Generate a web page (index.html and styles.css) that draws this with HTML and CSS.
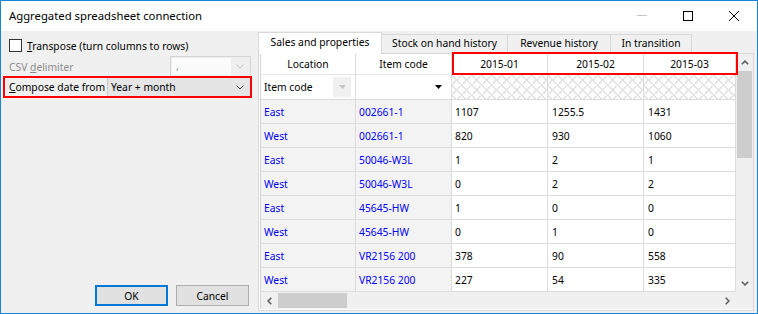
FILE: index.html
```html
<!DOCTYPE html>
<html>
<head>
<meta charset="utf-8">
<link rel="stylesheet" href="styles.css">
</head>
<body>
<div class="window">
  <div class="titlebar">
    <div class="title">Aggregated spreadsheet connection</div>
    <div class="caption-btns">
      <div class="cbtn"><svg width="10" height="10" viewBox="0 0 10 10"><line x1="0" y1="4.5" x2="10" y2="4.5" stroke="#c4c4c4" stroke-width="1"/></svg></div>
      <div class="cbtn"><svg width="10" height="10" viewBox="0 0 10 10"><rect x="0.5" y="0.5" width="9" height="9" fill="none" stroke="#000" stroke-width="1"/></svg></div>
      <div class="cbtn"><svg width="10" height="10" viewBox="0 0 10 10"><path d="M0 0 L10 10 M10 0 L0 10" stroke="#000" stroke-width="1"/></svg></div>
    </div>
  </div>
  <div class="client">
    <div class="left">
      <div class="check-row"><span class="checkbox"></span><span><u>T</u>ranspose (turn columns to rows)</span></div>
      <div class="csv-row">
        <span class="disabled-label">CSV <u>d</u>elimiter</span>
        <div class="combo-disabled"><span class="cd-field">,</span><svg class="chev" width="8" height="5" viewBox="0 0 8 5"><path d="M0.5 0.5 L4 4 L7.5 0.5" fill="none" stroke="#c2c2c2" stroke-width="1"/></svg></div>
      </div>
      <div class="date-row">
        <span class="date-label"><u>C</u>ompose date from</span>
        <div class="combo"><span class="combo-text">Year + month</span><svg class="chev" width="8" height="5" viewBox="0 0 8 5"><path d="M0.5 0.5 L4 4 L7.5 0.5" fill="none" stroke="#404040" stroke-width="1"/></svg></div>
      </div>
      <div class="buttons">
        <button class="btn btn-default">OK</button>
        <button class="btn">Cancel</button>
      </div>
    </div>
    <div class="tabs">
      <div class="tabstrip">
        <div class="tab sel t1">Sales and properties</div>
        <div class="tab t2">Stock on hand history</div>
        <div class="tab t3">Revenue history</div>
        <div class="tab t4">In transition</div>
      </div>
      <div class="tabpage">
        <div class="gridbox">
          <div class="gridmain">
            <div class="gtable">
              <div class="row hrow">
                <div class="cell c1">Location</div>
                <div class="cell c2">Item code</div>
                <div class="hl">
                  <div class="cell c3">2015-01</div>
                  <div class="cell c4">2015-02</div>
                  <div class="cell c5">2015-03</div>
                </div>
              </div>
              <div class="row frow">
                <div class="cell c1 fcell"><span>Item code</span><span class="fbtn dis"><svg width="7" height="4" viewBox="0 0 7 4"><path d="M0 0 H7 L3.5 4 Z" fill="#c3c3c3"/></svg></span></div>
                <div class="cell c2 fcell"><span></span><span class="fbtn"><svg width="7" height="4" viewBox="0 0 7 4"><path d="M0 0 H7 L3.5 4 Z" fill="#000"/></svg></span></div>
                <div class="cell c3 hatch"></div>
                <div class="cell c4 hatch"></div>
                <div class="cell c5 hatch"></div>
              </div>
              <div class="row drow"><div class="cell c1">East</div><div class="cell c2">002661-1</div><div class="cell c3">1107</div><div class="cell c4">1255.5</div><div class="cell c5">1431</div></div>
              <div class="row drow"><div class="cell c1">West</div><div class="cell c2">002661-1</div><div class="cell c3">820</div><div class="cell c4">930</div><div class="cell c5">1060</div></div>
              <div class="row drow"><div class="cell c1">East</div><div class="cell c2">50046-W3L</div><div class="cell c3">1</div><div class="cell c4">2</div><div class="cell c5">1</div></div>
              <div class="row drow"><div class="cell c1">West</div><div class="cell c2">50046-W3L</div><div class="cell c3">0</div><div class="cell c4">2</div><div class="cell c5">2</div></div>
              <div class="row drow"><div class="cell c1">East</div><div class="cell c2">45645-HW</div><div class="cell c3">1</div><div class="cell c4">0</div><div class="cell c5">0</div></div>
              <div class="row drow"><div class="cell c1">West</div><div class="cell c2">45645-HW</div><div class="cell c3">0</div><div class="cell c4">1</div><div class="cell c5">0</div></div>
              <div class="row drow"><div class="cell c1">East</div><div class="cell c2">VR2156 200</div><div class="cell c3">378</div><div class="cell c4">90</div><div class="cell c5">558</div></div>
              <div class="row drow"><div class="cell c1">West</div><div class="cell c2">VR2156 200</div><div class="cell c3">227</div><div class="cell c4">54</div><div class="cell c5">335</div></div>
            </div>
            <div class="vscroll">
              <div class="sbtn"><svg width="8" height="5" viewBox="0 0 8 5"><path d="M0.8 4.3 L4 1.1 L7.2 4.3" fill="none" stroke="#606060" stroke-width="1.6"/></svg></div>
              <div class="vthumb"></div>
              <div class="vtrack"></div>
              <div class="sbtn"><svg width="8" height="5" viewBox="0 0 8 5"><path d="M0.8 0.7 L4 3.9 L7.2 0.7" fill="none" stroke="#606060" stroke-width="1.6"/></svg></div>
            </div>
          </div>
          <div class="hbar">
            <div class="hscroll">
              <div class="sbtn"><svg width="5" height="8" viewBox="0 0 5 8"><path d="M4.3 0.8 L1.1 4 L4.3 7.2" fill="none" stroke="#606060" stroke-width="1.6"/></svg></div>
              <div class="hthumb"></div>
              <div class="htrack"></div>
              <div class="sbtn"><svg width="5" height="8" viewBox="0 0 5 8"><path d="M0.7 0.8 L3.9 4 L0.7 7.2" fill="none" stroke="#606060" stroke-width="1.6"/></svg></div>
            </div>
            <div class="corner"></div>
          </div>
        </div>
      </div>
    </div>
  </div>
</div>
</body>
</html>
```
FILE: styles.css
```css
* { box-sizing: border-box; }
html, body { margin: 0; padding: 0; }
body {
  font-family: "Noto Sans", "DejaVu Sans", sans-serif;
  font-size: 10.3px;
  color: #000;
  background: #fff;
}
u { text-decoration: underline; text-underline-offset: 1px; }

.window {
  width: 758px;
  height: 314px;
  border: 1px solid #1883d7;
  display: flex;
  flex-direction: column;
  background: #f0f0f0;
  overflow: hidden;
}

/* title bar */
.titlebar {
  height: 30px;
  flex: none;
  background: #fff;
  display: flex;
}
.title {
  flex: 1;
  padding-left: 8px;
  font-size: 11.3px;
  line-height: 30px;
  white-space: nowrap;
}
.caption-btns { display: flex; }
.cbtn {
  width: 46px;
  display: flex;
  align-items: center;
  justify-content: center;
}
.cbtn svg { display: block; }

/* client */
.client {
  flex: 1;
  display: flex;
  min-height: 0;
}
.left {
  width: 257px;
  flex: none;
  display: flex;
  flex-direction: column;
  padding: 7px 7px 7px 8px;
}
.check-row {
  display: flex;
  align-items: center;
  gap: 5px;
  height: 15px;
  white-space: nowrap;
}
.checkbox {
  width: 13px;
  height: 13px;
  flex: none;
  border: 1px solid #333;
  background: #fff;
}
.csv-row {
  display: flex;
  align-items: center;
  justify-content: space-between;
  height: 21px;
  margin-top: 3px;
}
.disabled-label { color: #8c8c8c; white-space: nowrap; }
.combo-disabled {
  width: 81px;
  height: 21px;
  border: 1px solid #d4d4d4;
  background: #efefef;
  display: flex;
  align-items: center;
  padding: 1px 6px 1px 1px;
}
.cd-field {
  width: 59px;
  height: 17px;
  background: #fbfbfb;
  color: #7f8fb0;
  padding-left: 4px;
  line-height: 17px;
}
.combo-disabled .chev { margin-left: auto; }
.chev { display: block; flex: none; }

.date-row {
  display: flex;
  height: 22px;
  border: 2px solid #ff0000;
  margin: -1px -1px 0 -6px;
}
.date-label {
  width: 102px;
  flex: none;
  padding-left: 4px;
  line-height: 18px;
  white-space: nowrap;
}
.combo {
  flex: 1;
  display: flex;
  align-items: center;
  background: #e5e5e5;
  border-left: 1px solid #c9c9c9;
  padding: 0 6px 0 3px;
}
.combo-text { flex: 1; white-space: nowrap; }

.buttons {
  margin-top: auto;
  display: flex;
  justify-content: flex-end;
  gap: 8px;
  padding-right: 2px;
}
.btn {
  width: 73px;
  height: 21px;
  padding: 0;
  font: inherit;
  color: #000;
  background: #e1e1e1;
  border: 1px solid #adadad;
}
.btn-default { border: 2px solid #0078d7; }

/* tabs */
.tabs {
  flex: 1;
  display: flex;
  flex-direction: column;
  padding: 1px 3px 2px 0;
  min-width: 0;
}
.tabstrip {
  display: flex;
  align-items: flex-end;
  height: 21px;
  flex: none;
}
.tab {
  height: 19px;
  border: 1px solid #d9d9d9;
  border-bottom: none;
  background: #f0f0f0;
  text-align: center;
  line-height: 17px;
  white-space: nowrap;
  margin-left: -1px;
}
.tab.sel {
  height: 22px;
  margin-bottom: -1px;
  margin-left: 0;
  background: #fff;
  line-height: 19px;
  position: relative;
  z-index: 1;
}
.t1 { width: 124px; }
.t2 { width: 127px; }
.t3 { width: 104px; }
.t4 { width: 82px; }

.tabpage {
  flex: 1;
  border: 1px solid #d9d9d9;
  background: #fff;
  padding-left: 1px;
  min-height: 0;
}
.gridbox {
  border-left: 1px solid #d6d6d6;
  display: flex;
  flex-direction: column;
}
.gridmain { display: flex; }
.gtable { width: 475px; flex: none; }
.row { display: flex; }
.cell {
  flex: none;
  border-right: 1px solid #dcdcdc;
  border-bottom: 1px solid #dcdcdc;
  padding-left: 3px;
  white-space: nowrap;
  overflow: hidden;
}
.c1 { width: 95px; }
.c2 { width: 96px; }
.c3 { width: 96px; }
.c4 { width: 96px; padding-left: 4px; }
.c5 { width: 92px; padding-left: 4px; }

.hrow { height: 21px; }
.hrow .cell {
  padding-left: 0;
  text-align: center;
  line-height: 21px;
  border-bottom-color: #e6e6e6;
}
.hl {
  display: flex;
  position: relative;
}
.hl::after {
  content: "";
  position: absolute;
  left: 0;
  right: -2px;
  top: -2px;
  bottom: 0;
  border: 2px solid #ff0000;
  z-index: 2;
  pointer-events: none;
}

.frow { height: 25px; }
.frow .cell { line-height: 24px; }
.fcell {
  display: flex;
  align-items: center;
  justify-content: space-between;
  padding-right: 4px;
}
.fbtn {
  width: 18px;
  height: 20px;
  display: flex;
  align-items: center;
  justify-content: center;
}
.fbtn.dis { background: #f0f0f0; }
.fbtn svg { display: block; }
.hatch {
  background-color: #fff;
  background-image:
    linear-gradient(45deg, transparent 45%, #e2e2e2 45%, #e2e2e2 55%, transparent 55%),
    linear-gradient(-45deg, transparent 45%, #e2e2e2 45%, #e2e2e2 55%, transparent 55%);
  background-size: 10px 10px;
}

.drow { height: 24px; }
.drow .cell { line-height: 24px; }
.drow .c1, .drow .c2 { background: #f3f3f3; color: #0000ff; }

/* scrollbars */
.vscroll {
  width: 17px;
  flex: none;
  background: #f0f0f0;
  display: flex;
  flex-direction: column;
}
.sbtn {
  width: 17px;
  height: 17px;
  flex: none;
  display: flex;
  align-items: center;
  justify-content: center;
}
.sbtn svg { display: block; }
.vthumb {
  height: 87px;
  margin: 0 1px;
  background: #cdcdcd;
  flex: none;
}
.vtrack { flex: 1; }

.hbar { display: flex; height: 17px; }
.hscroll {
  width: 475px;
  flex: none;
  background: #f0f0f0;
  display: flex;
}
.hthumb {
  width: 69px;
  margin: 1px 0;
  background: #cdcdcd;
  flex: none;
}
.htrack { flex: 1; }
.corner { width: 17px; background: #f0f0f0; }
```
